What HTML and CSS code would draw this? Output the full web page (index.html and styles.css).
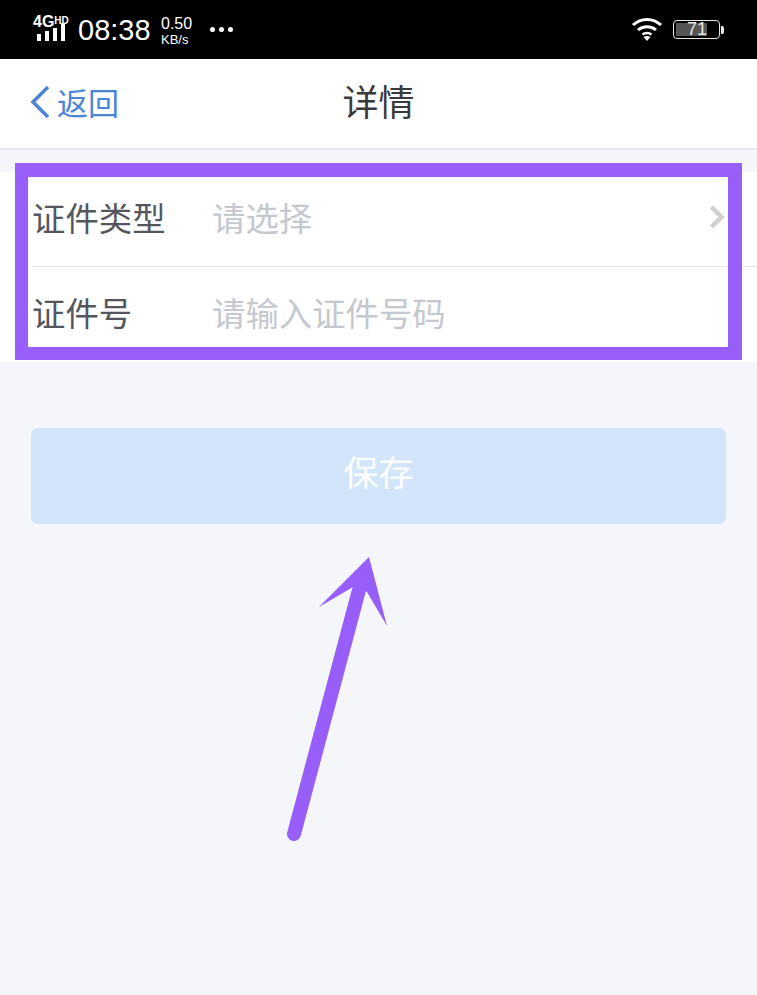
FILE: index.html
```html
<!DOCTYPE html>
<html lang="zh-CN">
<head>
    <meta charset="UTF-8">
    <meta name="viewport" content="width=device-width, initial-scale=1.0">
    <title>详情</title>
    <link rel="stylesheet" href="styles.css">
</head>
<body>
    <div class="status-bar">
        <div class="status-left">
            <div class="signal">
                <div class="net"><span class="net-4g">4G</span><span class="net-hd">HD</span></div>
                <div class="bars"><i class="b1"></i><i class="b2"></i><i class="b3"></i><i class="b4"></i></div>
            </div>
            <span class="clock">08:38</span>
            <div class="speed"><span class="speed-num">0.50</span><span class="speed-unit">KB/s</span></div>
            <div class="dots"><i></i><i></i><i></i></div>
        </div>
        <div class="status-right">
            <svg class="wifi" width="32" height="26" viewBox="0 0 32 26">
                <path d="M2 9 C10 1.500 22 1.500 30 9" fill="none" stroke="#fff" stroke-width="3"/>
                <path d="M7 14 C12 9.500 20 9.500 25 14" fill="none" stroke="#fff" stroke-width="3"/>
                <path d="M11.500 18.500 C14 16.500 18 16.500 20.500 18.500" fill="none" stroke="#fff" stroke-width="2.500"/>
                <path d="M12.500 21 L16 25 L19.500 21 C17.500 19.500 14.500 19.500 12.500 21 Z" fill="#fff"/>
            </svg>
            <div class="battery">
                <div class="battery-body">
                    <div class="battery-fill"></div>
                    <span class="battery-num">71</span>
                </div>
                <div class="battery-cap"></div>
            </div>
        </div>
    </div>

    <div class="nav">
        <div class="back">
            <svg class="back-icon" width="20" height="34" viewBox="0 0 20 34">
                <path d="M18 2 L3 17 L18 32" fill="none" stroke="#4a86d4" stroke-width="3.600"/>
            </svg>
            <span>返回</span>
        </div>
        <div class="nav-title">详情</div>
    </div>

    <div class="form">
        <div class="row row-first">
            <span class="row-label">证件类型</span>
            <span class="row-value">请选择</span>
            <svg class="chevron" width="18" height="24" viewBox="0 0 18 24">
                <path d="M3.500 2 L13.500 12 L3.500 22" fill="none" stroke="#d0d0d2" stroke-width="4.500"/>
            </svg>
        </div>
        <div class="row">
            <span class="row-label">证件号</span>
            <span class="row-value">请输入证件号码</span>
        </div>
    </div>

    <div class="save-wrap">
        <div class="save-btn">保存</div>
    </div>

    <!-- annotation drawn over the screenshot -->
    <div class="mark-box"></div>
    <svg class="mark-arrow" width="757" height="995" viewBox="0 0 757 995">
        <path d="M294 834 L359 590" fill="none" stroke="#975efa" stroke-width="14" stroke-linecap="round"/>
        <path d="M369 557 L387 626 L367 592 L353 587 L319 607 Z" fill="#975efa"/>
    </svg>
</body>
</html>
```

FILE: styles.css
```css
html, body {
    margin: 0;
    padding: 0;
}
body {
    position: relative;
    width: 757px;
    height: 995px;
    overflow: hidden;
    background: #f4f6fa;
    font-family: "Noto Sans CJK SC", "Liberation Sans", sans-serif;
}
.status-bar {
    height: 59px;
    background: #000;
    color: #fff;
    display: flex;
    justify-content: space-between;
    align-items: center;
    padding: 0 33px;
    box-sizing: border-box;
    font-family: "Liberation Sans", sans-serif;
}
.status-left {
    display: flex;
    align-items: center;
}
.signal {
    position: relative;
    width: 36px;
    height: 26px;
    margin-top: -3px;
}
.net {
    display: flex;
    align-items: flex-start;
    font-weight: bold;
    line-height: 14px;
    height: 14px;
}
.net-4g {
    font-size: 16px;
}
.net-hd {
    font-size: 10px;
    line-height: 11px;
}
.bars {
    position: absolute;
    left: 4px;
    bottom: 0;
    display: flex;
    align-items: flex-end;
    gap: 4px;
}
.bars i {
    display: block;
    width: 4px;
    background: #fff;
}
.bars .b1 { height: 7px; }
.bars .b2 { height: 10px; }
.bars .b3 { height: 13px; }
.bars .b4 { height: 18px; }
.clock {
    font-size: 29px;
    line-height: 34px;
    margin-left: 9px;
    width: 83px;
}
.speed {
    display: flex;
    flex-direction: column;
    width: 49px;
    margin-top: 2px;
}
.speed-num {
    font-size: 16px;
    line-height: 17px;
}
.speed-unit {
    font-size: 13px;
    line-height: 15px;
}
.dots {
    display: flex;
    gap: 4px;
}
.dots i {
    display: block;
    width: 5px;
    height: 5px;
    border-radius: 50%;
    background: #fff;
}
.status-right {
    display: flex;
    align-items: center;
    gap: 10px;
}
.wifi {
    margin-top: -1px;
}
.battery {
    display: flex;
    align-items: center;
}
.battery-body {
    position: relative;
    width: 45px;
    height: 17px;
    border: 1.500px solid #e6e6e6;
    border-radius: 4px;
}
.battery-fill {
    width: 31px;
    height: 13px;
    margin: 2px;
    background: #555;
    border-radius: 1px;
}
.battery-num {
    position: absolute;
    left: 13px;
    top: 0;
    font-size: 18px;
    line-height: 17px;
    color: #e6e6e6;
}
.battery-cap {
    width: 3px;
    height: 8px;
    margin-left: 1px;
    background: #e6e6e6;
    border-radius: 0 2px 2px 0;
}
.nav {
    position: relative;
    height: 89px;
    background: #fff;
    border-bottom: 2px solid #e5e6ef;
    display: flex;
    align-items: center;
    justify-content: center;
}
.back {
    position: absolute;
    left: 30px;
    top: 26px;
    display: flex;
    align-items: center;
    gap: 7px;
    color: #4a86d4;
    font-size: 31px;
    line-height: 34px;
}
.nav-title {
    font-size: 36px;
    color: #3a3a3c;
    line-height: 1;
    margin-top: -7px;
}
.form {
    margin-top: 22px;
    background: #fff;
    padding-left: 32px;
}
.row {
    position: relative;
    height: 95px;
    display: flex;
    align-items: center;
    box-sizing: border-box;
    font-size: 33.400px;
    line-height: 1;
    padding-bottom: 5px;
}
.row-first {
    border-bottom: 1px solid #e4e5ea;
}
.row-label {
    width: 180px;
    color: #55565c;
}
.row-value {
    color: #c4c8cf;
}
.chevron {
    position: absolute;
    right: 31px;
    top: 33px;
}
.save-wrap {
    padding: 66px 31px 0;
}
.save-btn {
    height: 96px;
    border-radius: 7px;
    background: #d2e5fb;
    color: #fff;
    font-size: 35px;
    line-height: 86px;
    text-align: center;
}
.mark-box {
    position: absolute;
    left: 15px;
    top: 163px;
    width: 727px;
    height: 197px;
    box-sizing: border-box;
    border-style: solid;
    border-color: #975efa;
    border-width: 14px 14px 13px 13px;
}
.mark-arrow {
    position: absolute;
    left: 0;
    top: 0;
}
```
